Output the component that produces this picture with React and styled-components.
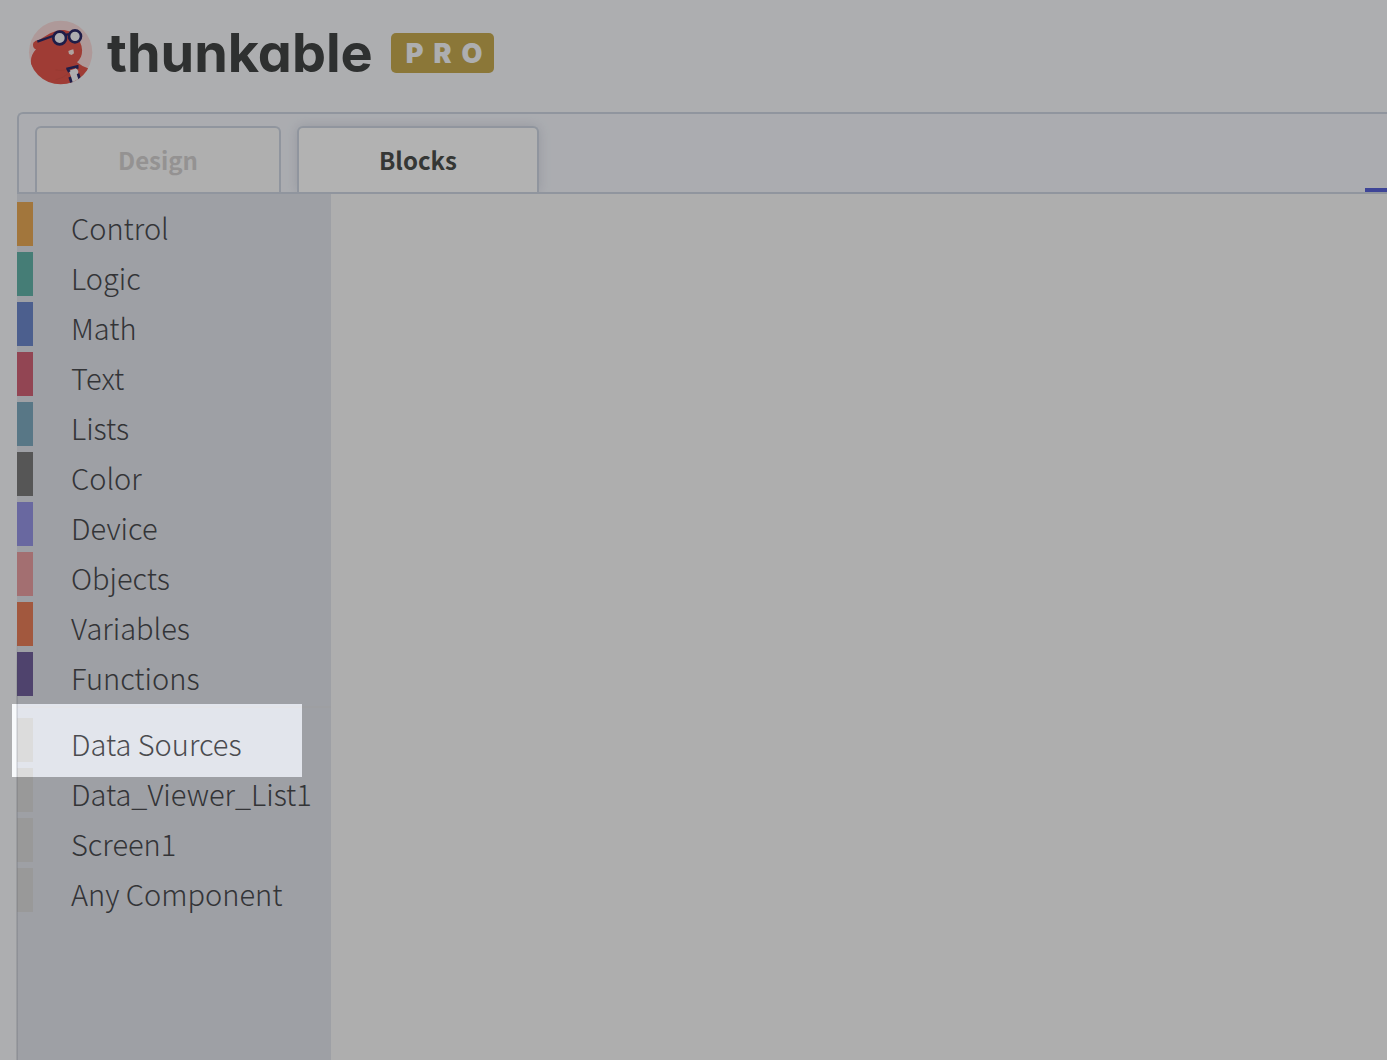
import React, { useState } from "react";
import styled, { createGlobalStyle, css } from "styled-components";

const GlobalStyle = createGlobalStyle`
  *, *::before, *::after { box-sizing: border-box; }
  body {
    margin: 0;
    background: #f8fafc;
    font-family: "Noto Sans CJK SC", "Noto Sans", sans-serif;
    overflow-x: hidden;
  }
  button { font: inherit; color: inherit; }
`;

const Page = styled.div`
  display: flex;
  flex-direction: column;
  min-height: 100vh;
  overflow: hidden;
`;

const Header = styled.header`
  display: flex;
  align-items: center;
  height: 112px;
  padding: 0 28px 7px;
`;

const Brand = styled.a`
  display: flex;
  align-items: center;
  gap: 14px;
  color: #434545;
  text-decoration: none;
`;

const Wordmark = styled.span`
  font-family: Inter, sans-serif;
  font-size: 54px;
  font-weight: 700;
  line-height: 64px;
  font-feature-settings: "cv11";
`;

const ProBadge = styled.span`
  display: flex;
  align-items: center;
  height: 40px;
  margin-left: 18px;
  padding: 2px 2px 0 15px;
  border-radius: 5px;
  background: #c7ab51;
  color: #f8fafc;
  font-family: Inter, sans-serif;
  font-size: 27px;
  font-weight: 900;
  letter-spacing: 10px;
`;

const Workspace = styled.main`
  display: flex;
  flex-direction: column;
  flex: 1;
  margin-left: 17px;
`;

const TabBar = styled.div`
  display: flex;
  align-items: flex-end;
  gap: 16px;
  height: 82px;
  padding-left: 16px;
  border: 2px solid #ced6e2;
  border-right: 0;
  border-top-left-radius: 6px;
  background: #f5f7fd;
`;

const Tab = styled.button`
  width: ${(p) => p.$width}px;
  height: 66px;
  padding: 0 0 2px;
  border: 2px solid #ced6e2;
  border-bottom: 0;
  border-radius: 6px 6px 0 0;
  background: #fbfbfb;
  color: #d4d2d1;
  font-size: 24px;
  font-weight: 700;
  cursor: pointer;
  ${(p) =>
    p.$active &&
    css`
      background: #fff;
      color: #4d504c;
      box-shadow: 0 0 12px rgba(110, 120, 140, 0.22);
      clip-path: inset(-14px -14px 0);
    `}
`;

const TabIndicator = styled.span`
  width: 22px;
  height: 4px;
  margin-left: auto;
  background: #5a64d9;
`;

const Editor = styled.div`
  display: flex;
  flex: 1;
`;

const Sidebar = styled.nav`
  position: relative;
  width: 314px;
  flex-shrink: 0;
  padding-top: 8px;
  background: #e2e5ec;

  &::before {
    content: "";
    position: absolute;
    z-index: 1;
    top: 440px;
    bottom: 0;
    left: -1px;
    width: 2px;
    background: linear-gradient(transparent, rgba(90, 95, 110, 0.16) 40px);
  }
`;

const Canvas = styled.section`
  flex: 1;
  background: #f9f9f9;
`;

const Group = styled.ul`
  display: flex;
  flex-direction: column;
  gap: 6px;
  margin: 0;
  padding: 0;
  list-style: none;

  & + & {
    margin-top: 10px;
    padding-top: 10px;
    border-top: 2px solid #e3e4e8;
  }
`;

const Item = styled.li`
  position: relative;
  height: 44px;

  ${(p) =>
    p.$spotlight &&
    css`
      &::after {
        content: "";
        position: absolute;
        z-index: 10;
        top: -14px;
        left: -5px;
        width: 290px;
        height: 73px;
        box-shadow: 0 0 0 200vmax rgba(0, 0, 0, 0.3);
        pointer-events: none;
      }
    `}
`;

const Category = styled.button`
  display: block;
  width: 100%;
  height: 44px;
  padding: 0 0 0 38px;
  border: 0;
  border-left: 16px solid ${(p) => p.$color};
  background: transparent;
  color: #4a4b4f;
  font-size: 29px;
  font-weight: 300;
  line-height: 50px;
  text-align: left;
  white-space: nowrap;
  cursor: pointer;
`;

const blockGroups = [
  [
    ["Control", "#e9a956"],
    ["Logic", "#64b4a9"],
    ["Math", "#6d88cc"],
    ["Text", "#d26478"],
    ["Lists", "#7eabc1"],
    ["Color", "#7c7c7c"],
    ["Device", "#9796e6"],
    ["Objects", "#ea9fa3"],
    ["Variables", "#e97f5a"],
    ["Functions", "#72619d"],
  ],
  [
    ["Data Sources", "#dcdcdc"],
    ["Data_Viewer_List1", "#dcdcdc"],
    ["Screen1", "#dcdcdc"],
    ["Any Component", "#dcdcdc"],
  ],
];

function Beaver() {
  return (
    <svg width="65" height="65" viewBox="24 28 195 195" aria-hidden="true">
      <defs>
        <clipPath id="disc">
          <circle cx="122" cy="125" r="96" />
        </clipPath>
      </defs>
      <circle cx="122" cy="125" r="95" fill="#fadcdb" />
      <g clipPath="url(#disc)">
        <path
          d="M40 96 Q45 89 58 87 L78 75 Q103 58 132 58 Q165 63 180 94 Q191 116 183 138 Q178 148 171 155 Q184 166 204 173 Q202 193 177 213 L145 224 H78 Q45 205 34 163 Q28 138 48 116 Q36 111 40 96Z"
          fill="#e4574c"
        />
        <path d="M107 207 Q130 203 145 188 M106 178 Q124 181 140 177" fill="none" stroke="#d65249" strokeWidth="2" />
        <path d="M147 180 L169 173 L175 181 L173 197 L183 216 L155 222 L153 198Z" fill="#f9fafc" />
        <path d="M139 175 L172 167 L172 174" fill="none" stroke="#2b2a68" strokeWidth="7" />
        <path d="M144 177 L148 184 M149 199 L155 218 M174 189 L181 211" fill="none" stroke="#2b2a68" strokeWidth="8" />
        <path d="M145 121 L152 118 L160 116 L162 128 L155 133 L147 130Z" fill="#fbe9e4" />
      </g>
      <path d="M52 93 L99 76 M137 73 Q142 69 148 73" fill="none" stroke="#2b2a68" strokeWidth="7" />
      <circle cx="119" cy="82" r="19" fill="#f9fafc" stroke="#2b2a68" strokeWidth="8" />
      <circle cx="165" cy="77" r="18" fill="#f9fafc" stroke="#2b2a68" strokeWidth="8" />
    </svg>
  );
}

export default function App() {
  const [tab, setTab] = useState("Blocks");
  return (
    <Page>
      <GlobalStyle />
      <Header>
        <Brand href="#">
          <Beaver />
          <Wordmark>thunkable</Wordmark>
        </Brand>
        <ProBadge>PRO</ProBadge>
      </Header>
      <Workspace>
        <TabBar>
          <Tab $width={246} $active={tab === "Design"} onClick={() => setTab("Design")}>
            Design
          </Tab>
          <Tab $width={242} $active={tab === "Blocks"} onClick={() => setTab("Blocks")}>
            Blocks
          </Tab>
          <TabIndicator />
        </TabBar>
        <Editor>
          <Sidebar aria-label="Block categories">
            {blockGroups.map((group, i) => (
              <Group key={i}>
                {group.map(([name, color]) => (
                  <Item key={name} $spotlight={name === "Data Sources"}>
                    <Category $color={color}>{name}</Category>
                  </Item>
                ))}
              </Group>
            ))}
          </Sidebar>
          <Canvas aria-label="Block canvas" />
        </Editor>
      </Workspace>
    </Page>
  );
}
